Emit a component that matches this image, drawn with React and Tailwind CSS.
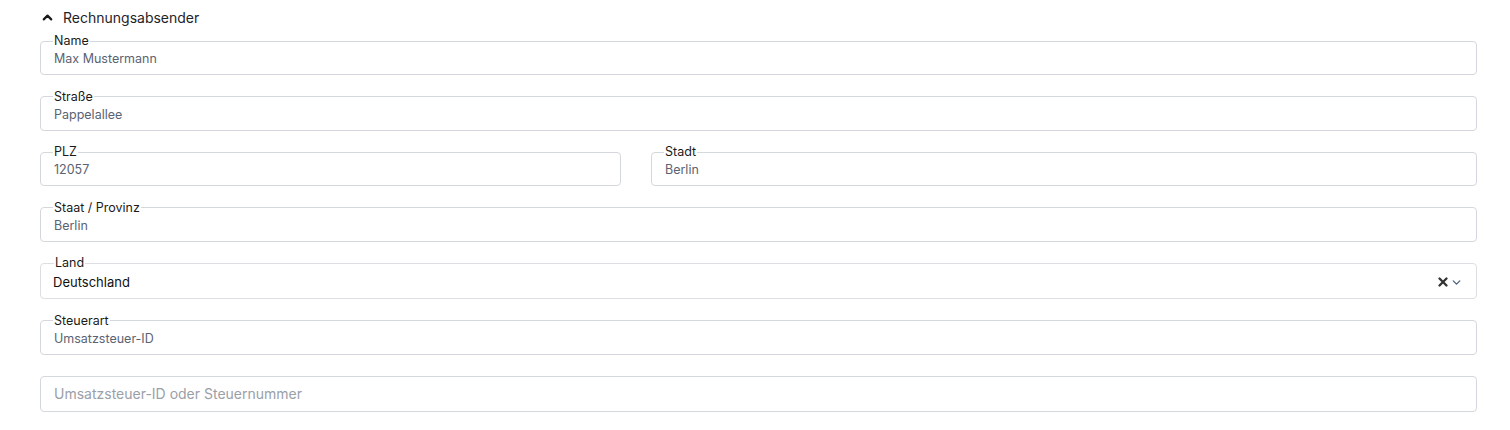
import React from "react";
import { ChevronUp, ChevronDown, X } from "lucide-react";

const font = { fontFamily: "Inter, 'Noto Sans', sans-serif" };

function Field({ label, value, className = "" }) {
  return (
    <fieldset className={`min-w-0 rounded border border-[#d4d7dd] px-[13px] pb-[7px] ${className}`}>
      <legend className="-ml-px px-px text-[12.5px] leading-[14px] text-[#1a1a1a]">{label}</legend>
      <div className="pt-[3px] text-[12.5px] leading-[16px] text-[#5a6372]">{value}</div>
    </fieldset>
  );
}

export default function App() {
  return (
    <div className="min-h-screen bg-white pl-10 pr-[33px] pt-[7px]" style={font}>
      {/* Header */}
      <div className="flex h-5 items-center gap-[8px]">
        <ChevronUp size={15} strokeWidth={3.5} className="text-[#1a1a1a]" />
        <span className="text-[14px] text-[#1f2328]">Rechnungsabsender</span>
      </div>

      <div className="mt-[7px] flex flex-col gap-[14.5px]">
        <Field label="Name" value="Max Mustermann" />
        <Field label="Straße" value="Pappelallee" />

        <div className="flex gap-[30px]">
          <Field label="PLZ" value="12057" className="w-[581px] shrink-0" />
          <Field label="Stadt" value="Berlin" className="flex-1" />
        </div>

        <Field label="Staat / Provinz" value="Berlin" />

        {/* Land select */}
        <fieldset className="min-w-0 rounded border border-[#dcdee2] pb-[7px] pl-3 pr-[13px]">
          <legend className="ml-px px-px text-[12.5px] leading-[14px] text-[#1a1a1a]">Land</legend>
          <div className="flex items-center justify-between pt-[3px]">
            <span className="text-[13px] leading-[18px] text-[#111]">Deutschland</span>
            <div className="flex items-center">
              <X size={14} strokeWidth={4} className="text-[#333]" />
              <ChevronDown size={13} strokeWidth={2.5} className="text-[#4f6180]" />
            </div>
          </div>
        </fieldset>

        <Field label="Steuerart" value="Umsatzsteuer-ID" />

        <div className="mt-[6.5px] flex h-9 items-center rounded border border-[#d4d7dd] px-[13px]">
          <span className="text-[14px] text-[#9aa0a8]">Umsatzsteuer-ID oder Steuernummer</span>
        </div>
      </div>
    </div>
  );
}
